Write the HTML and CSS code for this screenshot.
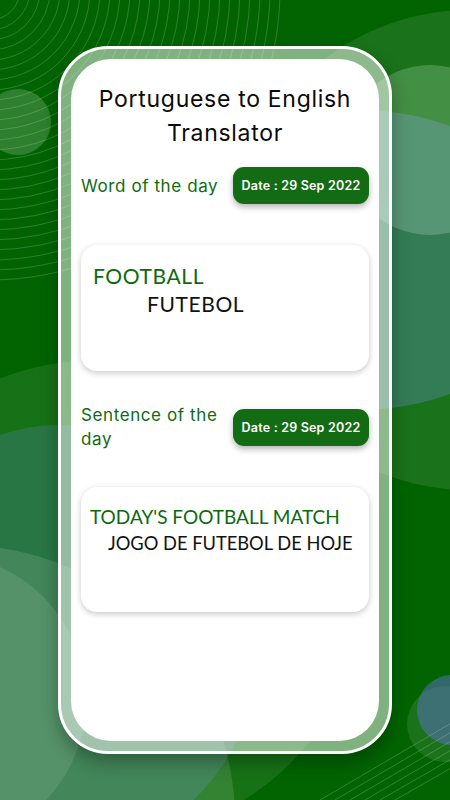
FILE: index.html
```html
<!DOCTYPE html>
<html>
<head>
<meta charset="utf-8">
<link rel="stylesheet" href="styles.css">
</head>
<body>
<div class="bg">
  <svg width="450" height="800" viewBox="0 0 450 800">
    <ellipse cx="100" cy="600" rx="260" ry="240" fill="rgba(255,255,255,0.09)"/>
    <ellipse cx="60" cy="640" rx="200" ry="215" fill="rgba(90,130,200,0.25)"/>
    <circle cx="-40" cy="820" r="275" fill="rgba(255,255,255,0.12)"/>
    <circle cx="-60" cy="700" r="146" fill="rgba(255,255,255,0.1)"/>
    <circle cx="470" cy="250" r="240" fill="rgba(255,255,255,0.1)"/>
    <ellipse cx="360" cy="260" rx="200" ry="150" fill="rgba(100,140,200,0.35)"/>
    <circle cx="430" cy="150" r="85" fill="rgba(235,255,240,0.2)"/>
    <g fill="none" stroke="rgba(255,255,255,0.2)" stroke-width="0.9">
      <circle cx="-10" cy="-10" r="30"/><circle cx="-10" cy="-10" r="40"/><circle cx="-10" cy="-10" r="50"/>
      <circle cx="-10" cy="-10" r="60"/><circle cx="-10" cy="-10" r="70"/><circle cx="-10" cy="-10" r="80"/>
      <circle cx="-10" cy="-10" r="90"/><circle cx="-10" cy="-10" r="100"/><circle cx="-10" cy="-10" r="110"/>
      <circle cx="-10" cy="-10" r="120"/><circle cx="-10" cy="-10" r="130"/><circle cx="-10" cy="-10" r="140"/>
      <circle cx="-10" cy="-10" r="150"/><circle cx="-10" cy="-10" r="160"/><circle cx="-10" cy="-10" r="170"/>
      <circle cx="-10" cy="-10" r="180"/><circle cx="-10" cy="-10" r="190"/><circle cx="-10" cy="-10" r="200"/>
      <circle cx="-10" cy="-10" r="210"/><circle cx="-10" cy="-10" r="220"/><circle cx="-10" cy="-10" r="230"/>
      <circle cx="-10" cy="-10" r="240"/><circle cx="-10" cy="-10" r="250"/><circle cx="-10" cy="-10" r="260"/>
      <circle cx="-10" cy="-10" r="270"/><circle cx="-10" cy="-10" r="280"/><circle cx="-10" cy="-10" r="290"/>
    </g>
    <circle cx="18" cy="122" r="33" fill="rgba(255,255,255,0.18)"/>
    <circle cx="445" cy="724" r="38" fill="rgba(255,255,255,0.1)"/>
    <circle cx="452" cy="710" r="35" fill="rgba(90,110,190,0.55)"/>
    <g stroke="rgba(255,255,255,0.22)" stroke-width="0.9">
      <line x1="320" y1="800" x2="460" y2="718"/>
      <line x1="335" y1="800" x2="460" y2="727"/>
      <line x1="350" y1="800" x2="460" y2="736"/>
      <line x1="365" y1="800" x2="460" y2="745"/>
      <line x1="380" y1="800" x2="460" y2="754"/>
      <line x1="395" y1="800" x2="460" y2="763"/>
    </g>
  </svg>
</div>
<div class="phone">
  <div class="screen">
    <h1 class="title">Portuguese to English Translator</h1>
    <div class="row">
      <div class="label">Word of the day</div>
      <div class="pill">Date : 29 Sep 2022</div>
    </div>
    <div class="card card-word">
      <div class="en">FOOTBALL</div>
      <div class="pt">FUTEBOL</div>
    </div>
    <div class="row row-sentence">
      <div class="label">Sentence of the day</div>
      <div class="pill">Date : 29 Sep 2022</div>
    </div>
    <div class="card card-sentence">
      <div class="en">TODAY'S FOOTBALL MATCH</div>
      <div class="pt">JOGO DE FUTEBOL DE HOJE</div>
    </div>
  </div>
</div>
</body>
</html>
```
FILE: styles.css
```css
html, body {
  margin: 0;
  padding: 0;
}
body {
  width: 450px;
  height: 800px;
  overflow: hidden;
  position: relative;
  background: #016401;
  font-family: Inter, "Open Sans", sans-serif;
}
.bg {
  position: absolute;
  left: 0;
  top: 0;
  width: 450px;
  height: 800px;
  z-index: 0;
}
.bg svg {
  display: block;
}
.phone {
  position: relative;
  z-index: 1;
  margin: 46px 0 0 58px;
  width: 334px;
  height: 708px;
  box-sizing: border-box;
  border: 3px solid #fff;
  border-radius: 50px;
  padding: 10px;
  background: rgba(255, 255, 255, 0.5);
  box-shadow: 0 8px 18px rgba(0, 0, 0, 0.3);
}
.screen {
  height: 100%;
  box-sizing: border-box;
  background: #fff;
  border-radius: 40px;
  padding: 23px 10px 0;
  display: flex;
  flex-direction: column;
}
.title {
  margin: 0;
  font-size: 23px;
  font-weight: 400;
  line-height: 34px;
  text-align: center;
  color: #0a0a0a;
  letter-spacing: 0.7px;
}
.row {
  display: flex;
  align-items: center;
  gap: 11px;
  margin-top: 17px;
}
.row-sentence {
  margin-top: 32px;
}
.label {
  flex: 1;
  font-size: 17px;
  line-height: 24px;
  color: #0f6b0f;
  letter-spacing: 0.6px;
}
.pill {
  flex: none;
  width: 136px;
  height: 37px;
  border-radius: 11px;
  background: #136c13;
  color: #fff;
  font-size: 12.5px;
  font-weight: 600;
  letter-spacing: 0.2px;
  display: flex;
  align-items: center;
  justify-content: center;
  box-shadow: 0 3px 6px rgba(0, 0, 0, 0.3);
}
.card {
  margin-top: 41px;
  height: 126px;
  box-sizing: border-box;
  background: #fff;
  border-radius: 16px;
  box-shadow: 0 2px 6px rgba(0, 0, 0, 0.22);
  font-family: Lato, sans-serif;
  white-space: nowrap;
}
.card-word {
  padding: 17px 12px 0;
}
.card-word .en {
  font-size: 21px;
  line-height: 28px;
  color: #0c6a0c;
  letter-spacing: 0.6px;
}
.card-word .pt {
  font-size: 21px;
  line-height: 28px;
  color: #111;
  padding-left: 54px;
  letter-spacing: 0.6px;
}
.card-sentence {
  margin-top: 36px;
  height: 125px;
  padding: 16px 9px 0;
}
.card-sentence .en {
  font-size: 19px;
  line-height: 27px;
  color: #0c6a0c;
}
.card-sentence .pt {
  font-size: 18.3px;
  line-height: 27px;
  color: #111;
  padding-left: 18px;
}
```
